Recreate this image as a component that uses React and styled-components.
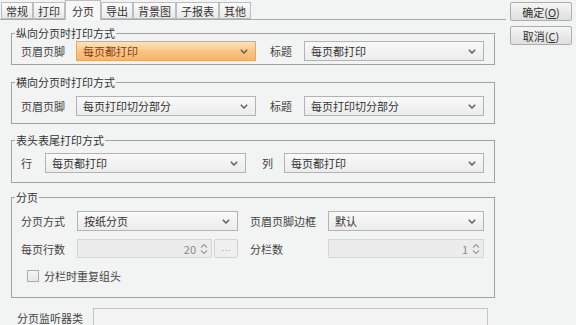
import React from "react";
import styled, { createGlobalStyle } from "styled-components";

const Global = createGlobalStyle`
  html, body { margin: 0; padding: 0; }
  body {
    background: #f2f3f3;
    font-family: "Noto Sans CJK SC", "Noto Sans", sans-serif;
    font-size: 11px;
    color: #3a3a3a;
    width: 576px;
    height: 325px;
    overflow: hidden;
  }
`;

const Page = styled.div`
  display: flex;
  width: 576px;
  height: 325px;
  overflow: hidden;
`;

const Main = styled.div`
  width: 506px;
  display: flex;
  flex-direction: column;
`;

const TabStrip = styled.div`
  display: flex;
  align-items: flex-end;
  height: 19px;
  padding-left: 1px;
  position: relative;
  z-index: 1;
`;

const Tab = styled.div`
  height: ${(p) => (p.$active ? 20 : 17)}px;
  margin-bottom: ${(p) => (p.$active ? -1 : 0)}px;
  padding: 0 ${(p) => (p.$active ? 6 : 4)}px;
  box-sizing: border-box;
  border: 1px solid #bdbdbd;
  border-bottom: ${(p) => (p.$active ? "none" : "1px solid #bdbdbd")};
  background: ${(p) =>
    p.$active ? "#f7f7f7" : "linear-gradient(#fbfbfb, #e9e9e9)"};
  display: flex;
  align-items: center;
  line-height: 14px;
  color: #333;
  white-space: nowrap;
`;

const Panel = styled.div`
  border-top: 1px solid #a9a9a9;
  padding: 6px 11px 0 11px;
  display: flex;
  flex-direction: column;
`;

const Group = styled.fieldset`
  margin: ${(p) => p.$mt || 0}px 0 0 0;
  padding: ${(p) => p.$pt}px 10px ${(p) => p.$pb}px 9px;
  border: 1px solid #a2a2a2;
  width: 484px;
  box-sizing: border-box;
  min-width: 0;
  display: flex;
  flex-direction: column;
  gap: ${(p) => p.$gap || 0}px;
`;

const Legend = styled.legend`
  padding: 0 1px;
  margin-left: -6px;
  line-height: 14px;
  font-size: 11px;
  color: #333;
`;

const Row = styled.div`
  display: flex;
  align-items: center;
  height: ${(p) => p.$h || 20}px;
`;

const Label = styled.span`
  width: ${(p) => p.$w}px;
  margin-left: ${(p) => p.$ml || 0}px;
  flex: none;
  white-space: nowrap;
  color: #444;
  line-height: 14px;
`;

const SelectBox = styled.div`
  width: ${(p) => p.$w}px;
  height: ${(p) => p.$h || 20}px;
  box-sizing: border-box;
  flex: none;
  border: 1px solid ${(p) => (p.$hot ? "#e9a65a" : "#b3b3b3")};
  background: ${(p) =>
    p.$hot
      ? "linear-gradient(#fde3bd, #f9c47f 55%, #f6b66b)"
      : "linear-gradient(#f9f9f9, #ececec)"};
  display: flex;
  align-items: center;
  padding: 0 7px 0 6px;
  color: ${(p) => (p.$hot ? "#8a3a1c" : "#333")};
`;

const Value = styled.span`
  flex: 1;
  white-space: nowrap;
  line-height: 14px;
`;

const Chevron = () => (
  <svg width="8" height="5" viewBox="0 0 8 5">
    <path d="M0.8 0.8 L4 4 L7.2 0.8" fill="none" stroke="#606060" strokeWidth="1.5" />
  </svg>
);

const Select = ({ w, hot, children }) => (
  <SelectBox $w={w} $hot={hot}>
    <Value>{children}</Value>
    <Chevron />
  </SelectBox>
);

const SpinBox = styled.div`
  width: ${(p) => p.$w}px;
  height: 19px;
  box-sizing: border-box;
  flex: none;
  border: 1px solid #d6d6d6;
  background: #ececec;
  display: flex;
  align-items: center;
  justify-content: flex-end;
  gap: 4px;
  padding: 0 3px 0 6px;
  color: #8a8a8a;
`;

const SpinArrows = () => (
  <svg width="8" height="12" viewBox="0 0 8 12">
    <path d="M1 4.5 L4 1.5 L7 4.5" fill="none" stroke="#9a9a9a" strokeWidth="1.2" />
    <path d="M1 7.5 L4 10.5 L7 7.5" fill="none" stroke="#9a9a9a" strokeWidth="1.2" />
  </svg>
);

const Spinner = ({ w, children }) => (
  <SpinBox $w={w}>
    <span>{children}</span>
    <SpinArrows />
  </SpinBox>
);

const DotButton = styled.div`
  width: 24px;
  height: 19px;
  margin-left: 2px;
  box-sizing: border-box;
  flex: none;
  border: 1px solid #d4d4d4;
  border-radius: 2px;
  background: #efefef;
  color: #a0a0a0;
  font-size: 9px;
  display: flex;
  align-items: flex-end;
  justify-content: center;
  line-height: 12px;
`;

const CheckRow = styled.label`
  display: flex;
  align-items: center;
  gap: 5px;
  margin-left: 6px;
  height: 14px;
  color: #444;
`;

const Box = styled.span`
  width: 10px;
  height: 10px;
  border: 1px solid #acacac;
  background: linear-gradient(#f4f4f4, #e6e6e6);
  flex: none;
`;

const BottomRow = styled.div`
  display: flex;
  align-items: flex-start;
  margin-top: 10px;
  padding-left: 6px;
`;

const Input = styled.div`
  width: 395px;
  height: 20px;
  box-sizing: border-box;
  border: 1px solid #c4c4c4;
  background: #f4f4f4;
`;

const BottomLabel = styled.span`
  width: 76px;
  padding-top: 3px;
  color: #444;
  line-height: 14px;
  white-space: nowrap;
`;

const Side = styled.div`
  display: flex;
  flex-direction: column;
  gap: 5px;
  padding: 2px 0 0 4px;
`;

const Button = styled.button`
  width: 62px;
  height: 19px;
  padding: 0;
  font-family: inherit;
  font-size: 11px;
  color: #333;
  border: 1px solid #adadad;
  border-radius: 2px;
  background: linear-gradient(#f6f6f6, #dedede);
  line-height: 14px;
  u { text-decoration: underline; }
`;

const tabs = ["常规", "打印", "分页", "导出", "背景图", "子报表", "其他"];

export default function App() {
  return (
    <>
      <Global />
      <Page>
        <Main>
          <TabStrip>
            {tabs.map((t) => (
              <Tab key={t} $active={t === "分页"}>
                {t}
              </Tab>
            ))}
          </TabStrip>
          <Panel>
            <Group $pt={1} $pb={3}>
              <Legend>纵向分页时打印方式</Legend>
              <Row>
                <Label $w={55}>页眉页脚</Label>
                <Select w={180} hot>
                  每页都打印
                </Select>
                <Label $w={34} $ml={14}>
                  标题
                </Label>
                <Select w={180}>每页都打印</Select>
              </Row>
            </Group>
            <Group $pt={7} $pb={7} $mt={10}>
              <Legend>横向分页时打印方式</Legend>
              <Row>
                <Label $w={55}>页眉页脚</Label>
                <Select w={180}>每页打印切分部分</Select>
                <Label $w={34} $ml={14}>
                  标题
                </Label>
                <Select w={180}>每页打印切分部分</Select>
              </Row>
            </Group>
            <Group $pt={6} $pb={9} $mt={9}>
              <Legend>表头表尾打印方式</Legend>
              <Row>
                <Label $w={24}>行</Label>
                <Select w={201}>每页都打印</Select>
                <Label $w={22} $ml={16}>
                  列
                </Label>
                <Select w={200}>每页都打印</Select>
              </Row>
            </Group>
            <Group $pt={7} $pb={14} $mt={7} $gap={8}>
              <Legend>分页</Legend>
              <Row>
                <Label $w={56}>分页方式</Label>
                <Select w={161}>按纸分页</Select>
                <Label $w={78} $ml={12}>
                  页眉页脚边框
                </Label>
                <Select w={156}>默认</Select>
              </Row>
              <Row $h={19}>
                <Label $w={56}>每页行数</Label>
                <Spinner w={135}>20</Spinner>
                <DotButton>…</DotButton>
                <Label $w={78} $ml={12}>
                  分栏数
                </Label>
                <Spinner w={156}>1</Spinner>
              </Row>
              <CheckRow style={{ marginTop: 3 }}>
                <Box />
                分栏时重复组头
              </CheckRow>
            </Group>
            <BottomRow>
              <BottomLabel>分页监听器类</BottomLabel>
              <Input />
            </BottomRow>
          </Panel>
        </Main>
        <Side>
          <Button>
            确定(<u>O</u>)
          </Button>
          <Button>
            取消(<u>C</u>)
          </Button>
        </Side>
      </Page>
    </>
  );
}
